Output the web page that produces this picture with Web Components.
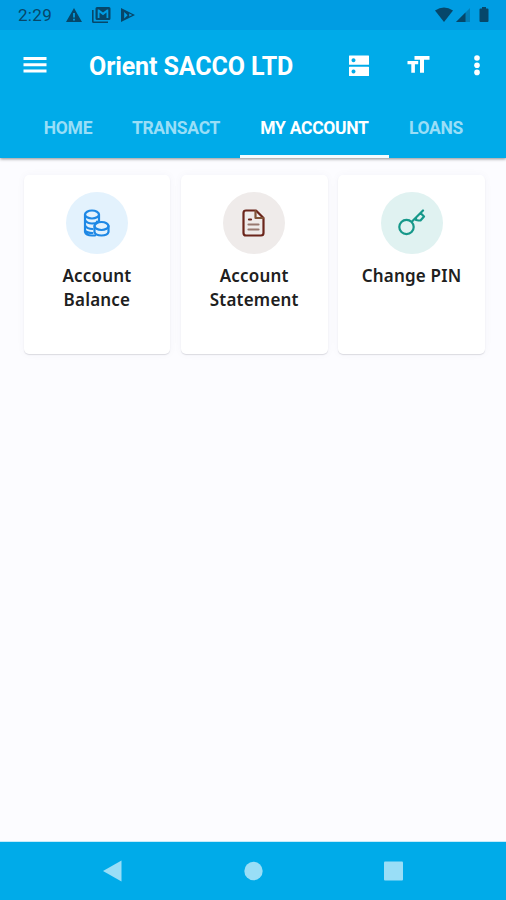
<!DOCTYPE html>
<html lang="en">
<head>
<meta charset="utf-8">
<title>Orient SACCO LTD</title>
<style>
  body {
    background-color: #fcfcff;
    font-family: Roboto, 'Noto Sans', sans-serif;
    height: 900px;
    margin: 0;
    overflow: hidden;
    width: 506px;
  }
</style>
</head>
<body>
<sacco-app></sacco-app>

<script>
class SaccoStatus extends HTMLElement {
  constructor() {
    super();

    const template = document.createElement( 'template' );
    template.innerHTML = /* template */ `
      <style>
        :host {
          align-items: center;
          background-color: #009de3;
          box-sizing: border-box;
          color: #06476a;
          display: flex;
          flex-direction: row;
          height: 30px;
          padding: 0 17px 0 18px;
        }

        span {
          font-size: 17px;
          letter-spacing: 0.3px;
          line-height: 32px;
          width: 47px;
        }

        svg {
          display: block;
          fill: currentColor;
        }

        .gap {
          flex-grow: 1;
        }
      </style>
      <span>2:29</span>
      <svg width="18" height="18" viewBox="0 0 18 18">
        <path fill-rule="evenodd" d="M9 2 17 16H1ZM8.1 7v4.5h1.8V7ZM8.1 12.8v1.7h1.8v-1.7Z"/>
      </svg>
      <svg width="20" height="18" viewBox="0 0 20 18" style="margin-left: 9px">
        <path fill-rule="evenodd" d="M0 4h1.6v11.4H16V17H1.500Q0 17 0 15.500ZM5 1H17q1.500 0 1.500 1.500V12.500Q18.500 14 17 14H5Q3.500 14 3.500 12.500V2.500Q3.500 1 5 1ZM5.700 3.500V12H7.500V6.500L11 9.200 14.500 6.500V12H16.300V3.500H15L11 6.500 7 3.500Z"/>
      </svg>
      <svg width="16" height="18" viewBox="0 0 16 18" style="margin-left: 8px">
        <path fill-rule="evenodd" d="M1 2 15 9 1 16ZM4.200 6v6.500l3.400-3.300ZM9.200 7.500v3l3-1.500Z"/>
      </svg>
      <div class="gap"></div>
      <svg width="20" height="18" viewBox="0 0 20 18">
        <path d="M1 4.500Q10-1.500 19 4.500L10 16Z"/>
      </svg>
      <svg width="16" height="18" viewBox="0 0 16 18" style="margin-left: 1px">
        <path opacity="0.35" d="M15 2V16H1Z"/>
        <path d="M10.500 6.500V16H1Z"/>
      </svg>
      <svg width="10" height="18" viewBox="0 0 10 18" style="margin: 0 0 0 8px">
        <path d="M3 1h4v1.500h1.500q1 0 1 1V15q0 1-1 1h-7q-1 0-1-1V3.500q0-1 1-1H3Z"/>
      </svg>
    `;

    // Root
    this.attachShadow( {mode: 'open'} );
    this.shadowRoot.appendChild( template.content.cloneNode( true ) );
  }
}

window.customElements.define( 'sacco-status', SaccoStatus );

class SaccoToolbar extends HTMLElement {
  constructor() {
    super();

    const template = document.createElement( 'template' );
    template.innerHTML = /* template */ `
      <style>
        :host {
          align-items: center;
          color: #ffffff;
          display: flex;
          flex-direction: row;
          height: 71px;
          padding: 0 25px 0 23px;
        }

        h1 {
          flex-grow: 1;
          font-size: 25px;
          font-weight: 700;
          letter-spacing: -0.1px;
          line-height: 71px;
          margin: 0 0 0 42px;
          padding: 2px 0 0 0;
          white-space: nowrap;
        }

        svg {
          display: block;
          fill: currentColor;
        }
      </style>
      <svg width="24" height="20" viewBox="0 0 24 20">
        <path d="M0.500 1h23v3h-23ZM0.500 7.200h23v3h-23ZM0.500 13.500h23v3h-23Z"/>
      </svg>
      <h1><slot></slot></h1>
      <svg width="22" height="22" viewBox="0 0 22 22" style="margin-right: 37px">
        <path fill-rule="evenodd" d="M1.500 0.500h19q0.500 0 0.500 0.500v8.300q0 0.500-0.500 0.500h-19q-0.500 0-0.500-0.500V1q0-0.500 0.500-0.500ZM1.500 11.800h19q0.500 0 0.500 0.500v8.300q0 0.500-0.500 0.500h-19q-0.500 0-0.500-0.500v-8.300q0-0.500 0.500-0.500ZM5.500 3.200a2 2 0 1 0 .01 0ZM5.500 14.400a2 2 0 1 0 .01 0Z"/>
      </svg>
      <svg width="24" height="22" viewBox="0 0 24 22" style="margin-right: 42px">
        <path d="M7.500 1H22.500V4.700H17V17.800H13V4.700H7.500ZM0.500 6H11.200V9.300H7.900V17.800H4.300V9.300H0.500Z"/>
      </svg>
      <svg width="8" height="22" viewBox="0 0 8 22">
        <circle cx="4" cy="3" r="2.800"/>
        <circle cx="4" cy="10.200" r="2.800"/>
        <circle cx="4" cy="17.400" r="2.800"/>
      </svg>
    `;

    // Root
    this.attachShadow( {mode: 'open'} );
    this.shadowRoot.appendChild( template.content.cloneNode( true ) );
  }
}

window.customElements.define( 'sacco-toolbar', SaccoToolbar );

class SaccoTab extends HTMLElement {
  constructor() {
    super();

    const template = document.createElement( 'template' );
    template.innerHTML = /* template */ `
      <style>
        :host {
          border-bottom: 3px solid transparent;
          box-sizing: border-box;
          color: #99def7;
          display: block;
          font-size: 17.5px;
          font-weight: 700;
          height: 57px;
          letter-spacing: -0.3px;
          line-height: 54px;
          text-align: center;
          white-space: nowrap;
        }

        :host( [selected] ) {
          border-bottom-color: #f4fcff;
          color: #ffffff;
        }
      </style>
      <slot></slot>
    `;

    // Root
    this.attachShadow( {mode: 'open'} );
    this.shadowRoot.appendChild( template.content.cloneNode( true ) );
  }
}

window.customElements.define( 'sacco-tab', SaccoTab );

class SaccoCard extends HTMLElement {
  constructor() {
    super();

    const template = document.createElement( 'template' );
    template.innerHTML = /* template */ `
      <style>
        :host {
          align-items: center;
          background-color: #ffffff;
          border-radius: 5px;
          box-shadow:
            0 1px 1px rgba( 40, 40, 60, 0.14 ),
            0 0 9px rgba( 40, 40, 90, 0.04 );
          box-sizing: border-box;
          color: #202020;
          display: flex;
          flex-direction: column;
          height: 179px;
          padding: 17px 0 0 0;
        }

        div {
          align-items: center;
          background-color: var( --card-tint );
          border-radius: 50%;
          color: var( --card-color );
          display: flex;
          height: 62px;
          justify-content: center;
          width: 62px;
        }

        p {
          font-family: 'Noto Sans', sans-serif;
          font-size: 17px;
          font-weight: 600;
          letter-spacing: 0.2px;
          line-height: 24px;
          margin: 10px 0 0 0;
          text-align: center;
        }
      </style>
      <div><slot name="icon"></slot></div>
      <p><slot></slot></p>
    `;

    // Root
    this.attachShadow( {mode: 'open'} );
    this.shadowRoot.appendChild( template.content.cloneNode( true ) );
  }
}

window.customElements.define( 'sacco-card', SaccoCard );

class SaccoNavigation extends HTMLElement {
  constructor() {
    super();

    const template = document.createElement( 'template' );
    template.innerHTML = /* template */ `
      <style>
        :host {
          align-items: center;
          background-color: #00abe9;
          box-shadow: 0 -1px 0 #c4ebfa;
          box-sizing: border-box;
          display: flex;
          flex-direction: row;
          height: 58px;
          justify-content: space-between;
          padding: 0 102px;
        }

        svg {
          display: block;
          fill: #99def7;
        }
      </style>
      <svg width="20" height="22" viewBox="0 0 20 22"><path d="M1 11 19.500 0.500V21.500Z"/></svg>
      <svg width="20" height="20" viewBox="0 0 20 20"><circle cx="10.500" cy="10" r="9.200"/></svg>
      <svg width="20" height="20" viewBox="0 0 20 20"><rect x="0" y="0.500" width="19" height="19" rx="1"/></svg>
    `;

    // Root
    this.attachShadow( {mode: 'open'} );
    this.shadowRoot.appendChild( template.content.cloneNode( true ) );
  }
}

window.customElements.define( 'sacco-navigation', SaccoNavigation );

class SaccoApp extends HTMLElement {
  constructor() {
    super();

    const template = document.createElement( 'template' );
    template.innerHTML = /* template */ `
      <style>
        :host {
          display: flex;
          flex-direction: column;
          height: 900px;
        }

        header {
          background-color: #00abe9;
          box-shadow: 0 1px 3px rgba( 0, 0, 0, 0.45 );
        }

        nav {
          display: grid;
          grid-template-columns: 88px 128px 149px 94px;
          padding: 0 0 0 24px;
        }

        main {
          align-content: start;
          display: grid;
          flex-grow: 1;
          gap: 10.5px;
          grid-template-columns: repeat( 3, 1fr );
          padding: 17px 21px 0 23.5px;
        }

        svg {
          display: block;
          fill: none;
          stroke: currentColor;
          stroke-linecap: round;
          stroke-linejoin: round;
          stroke-width: 2.2;
        }
      </style>
      <header>
        <sacco-status></sacco-status>
        <sacco-toolbar>Orient SACCO LTD</sacco-toolbar>
        <nav>
          <sacco-tab>HOME</sacco-tab>
          <sacco-tab>TRANSACT</sacco-tab>
          <sacco-tab selected>MY ACCOUNT</sacco-tab>
          <sacco-tab>LOANS</sacco-tab>
        </nav>
      </header>
      <main>
        <sacco-card style="--card-tint: #e3f2fd; --card-color: #1e88e5">
          <svg slot="icon" width="28" height="28" viewBox="0 0 28 28">
            <ellipse cx="9" cy="5.500" rx="7" ry="4"/>
            <path d="M2 5.500V23Q3 26.500 9 26.500H12M16 5.500V12M2 11Q4 14.500 9 14.500T14 12.500M2 16.500Q4 20 9.500 20M2 21.500Q4 24 9.500 24"/>
            <ellipse cx="18.500" cy="17" rx="7" ry="4"/>
            <path d="M11.500 17V23Q12.500 26.500 18.500 26.500T25.500 23V17"/>
          </svg>
          Account<br>Balance
        </sacco-card>
        <sacco-card style="--card-tint: #efebea; --card-color: #6b251b">
          <svg slot="icon" width="28" height="28" viewBox="0 0 28 28">
            <path d="M6 1.500H16L23.500 9V24Q23.500 26.500 21 26.500H6Q3.500 26.500 3.500 24V4Q3.500 1.500 6 1.500Z"/>
            <path d="M15.500 2V9H23" stroke="#805438"/>
            <path d="M9 10.500H11"/>
            <path d="M8.500 15.500H18.500M8.500 20.500H18.500" stroke="#98786f"/>
          </svg>
          Account<br>Statement
        </sacco-card>
        <sacco-card style="--card-tint: #e0f2f1; --card-color: #16988a">
          <svg slot="icon" width="28" height="28" viewBox="0 0 28 28">
            <circle cx="8.500" cy="18" r="7.200"/>
            <path d="M14 12.500 25 1.500M18 8.500V11L20.500 11.500H22.500L26 7.500 23 4.500"/>
          </svg>
          Change PIN
        </sacco-card>
      </main>
      <sacco-navigation></sacco-navigation>
    `;

    // Root
    this.attachShadow( {mode: 'open'} );
    this.shadowRoot.appendChild( template.content.cloneNode( true ) );
  }
}

window.customElements.define( 'sacco-app', SaccoApp );
</script>
</body>
</html>
